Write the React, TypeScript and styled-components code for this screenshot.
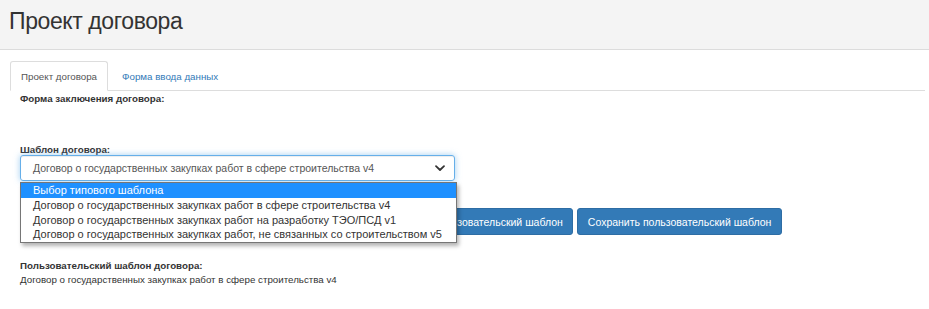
import type { FC } from "react";
import styled, { createGlobalStyle, css } from "styled-components";

const GlobalStyle = createGlobalStyle`
  body {
    margin: 0;
    background: #fff;
    color: #333;
    font-family: "Liberation Sans", Arial, sans-serif;
  }
`;

const Header = styled.header`
  height: 49px;
  background-color: #f4f4f4;
  border-bottom: 1px solid #dcdcdc;
`;

const Title = styled.h1`
  margin: 0;
  padding: 7px 0 0 9px;
  font-size: 23px;
  font-weight: 400;
  letter-spacing: -0.4px;
  line-height: 28px;
  color: #333;
`;

const Page = styled.main`
  padding: 11px 4px 0 10px;
`;

const Tabs = styled.ul`
  display: flex;
  margin: 0;
  padding: 0;
  list-style: none;
  border-bottom: 1px solid #ddd;
`;

const Tab = styled.li<{ $active?: boolean }>`
  margin: 0 2px -1px 0;
  padding: 7.5px 10px;
  font-size: 9.75px;
  line-height: 13px;
  border: 1px solid transparent;
  border-radius: 3px 3px 0 0;

  ${({ $active }) =>
    $active
      ? css`
          color: #555;
          background-color: #fff;
          border-color: #ddd #ddd transparent;
        `
      : css`
          margin-left: 1px;
          color: #337ab7;
        `}
`;

const Content = styled.section`
  padding: 1px 0 0 10px;
`;

const Label = styled.div<{ $gap?: number }>`
  margin-top: ${({ $gap }) => $gap ?? 0}px;
  font-size: 9.75px;
  font-weight: 700;
  line-height: 14px;
`;

const Text = styled.div`
  font-size: 9.75px;
  line-height: 14px;
`;

const SelectWrap = styled.div`
  position: relative;
  width: 435px;
  margin-top: -2px;
`;

const SelectBox = styled.div`
  display: flex;
  align-items: center;
  justify-content: space-between;
  height: 26px;
  box-sizing: border-box;
  padding: 0 8px 0 12px;
  font-size: 10.5px;
  color: #555;
  border: 1px solid #66afe9;
  border-radius: 3px;
  box-shadow: inset 0 1px 1px rgba(0, 0, 0, 0.075),
    0 0 6px rgba(102, 175, 233, 0.6);
`;

const Dropdown = styled.ul`
  position: absolute;
  top: 27px;
  left: 0;
  z-index: 2;
  width: 437px;
  box-sizing: border-box;
  margin: 0;
  padding: 0;
  list-style: none;
  background-color: #fff;
  border: 1px solid #767676;
  box-shadow: 2px 3px 4px rgba(0, 0, 0, 0.3);
`;

const Option = styled.li<{ $selected?: boolean }>`
  height: 14.75px;
  padding-left: 12px;
  font-size: 11px;
  line-height: 14.75px;
  white-space: nowrap;

  ${({ $selected }) =>
    $selected
      ? css`
          background-color: #1e90ff;
          color: #fff;
        `
      : css`
          color: #333;
        `}
`;

const Actions = styled.div`
  display: flex;
  gap: 4px;
  margin: 27px 0 0 353px;
`;

const Button = styled.button`
  height: 27px;
  padding: 0 9.5px;
  font-family: inherit;
  font-size: 10.5px;
  color: #fff;
  background-color: #337ab7;
  border: 1px solid #2e6da4;
  border-radius: 3px;
`;

const Chevron: FC = () => (
  <svg width="12" height="12" viewBox="0 0 12 12">
    <path
      d="M2 4.2 6 8l4-3.8"
      fill="none"
      stroke="#333"
      strokeWidth="1.8"
      strokeLinecap="round"
      strokeLinejoin="round"
    />
  </svg>
);

const options = [
  "Выбор типового шаблона",
  "Договор о государственных закупках работ в сфере строительства v4",
  "Договор о государственных закупках работ на разработку ТЭО/ПСД v1",
  "Договор о государственных закупках работ, не связанных со строительством v5",
];

const App: FC = () => {
  return (
    <>
      <GlobalStyle />
      <Header>
        <Title>Проект договора</Title>
      </Header>

      <Page>
        <Tabs>
          <Tab $active>Проект договора</Tab>
          <Tab>Форма ввода данных</Tab>
        </Tabs>

        <Content>
          <Label>Форма заключения договора:</Label>

          <Label $gap={37}>Шаблон договора:</Label>
          <SelectWrap>
            <SelectBox>
              <span>{options[1]}</span>
              <Chevron />
            </SelectBox>
            <Dropdown>
              {options.map((o, i) => (
                <Option key={o} $selected={i === 0}>
                  {o}
                </Option>
              ))}
            </Dropdown>
          </SelectWrap>

          <Actions>
            <Button>Загрузить пользовательский шаблон</Button>
            <Button>Сохранить пользовательский шаблон</Button>
          </Actions>

          <Label $gap={24}>Пользовательский шаблон договора:</Label>
          <Text>{options[1]}</Text>
        </Content>
      </Page>
    </>
  );
};

export default App;
